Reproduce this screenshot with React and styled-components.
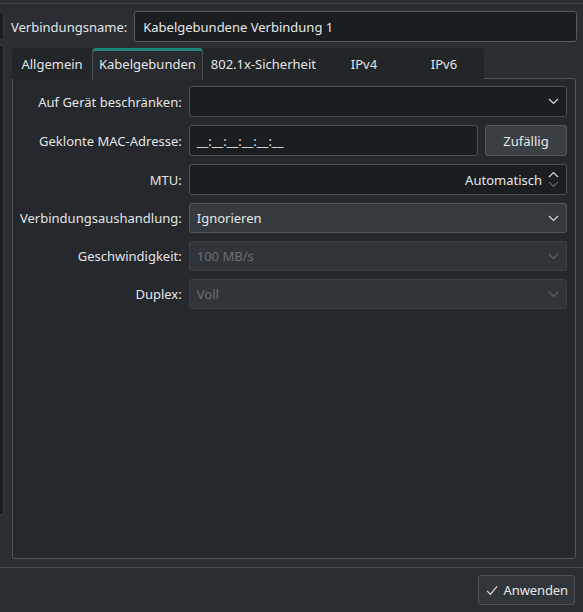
import styled, { createGlobalStyle } from 'styled-components'

const GlobalStyle = createGlobalStyle`
    html, body {
        margin: 0;
        padding: 0;
        background: #2a2e32;
    }
    body {
        font-family: "Noto Sans", "Open Sans", sans-serif;
        font-size: 13px;
        color: #e6e7e8;
    }
    * {
        box-sizing: border-box;
    }
`;

const tabs = ['Allgemein', 'Kabelgebunden', '802.1x-Sicherheit', 'IPv4', 'IPv6'];

function Chevron({ dim }) {
    return (
        <svg width="11" height="7" viewBox="0 0 11 7">
            <path d="M1 1 L5.5 5.5 L10 1" fill="none" stroke={dim ? '#5d6266' : '#d8d9da'} strokeWidth="1.2" />
        </svg>
    );
}

function SpinArrows() {
    return (
        <SpinBox>
            <svg width="11" height="7" viewBox="0 0 11 7">
                <path d="M1 6 L5.5 1.5 L10 6" fill="none" stroke="#d8d9da" strokeWidth="1.2" />
            </svg>
            <svg width="11" height="7" viewBox="0 0 11 7">
                <path d="M1 1 L5.5 5.5 L10 1" fill="none" stroke="#5d6266" strokeWidth="1.2" />
            </svg>
        </SpinBox>
    );
}

function App() {
    return (
        <Window>
            <GlobalStyle />
            <TopEdge />
            <Body>
                <SideStrip>
                    <StripBlock height={28} />
                    <StripBlock height={470} />
                </SideStrip>
                <Main>
                    <NameRow>
                        <Label>Verbindungsname:</Label>
                        <TextField>Kabelgebundene Verbindung 1</TextField>
                    </NameRow>

                    <TabBar>
                        {tabs.map((tab, i) => (
                            <Tab key={tab} active={i === 1} first={i === 0} last={i === tabs.length - 1}>
                                {tab}
                            </Tab>
                        ))}
                    </TabBar>

                    <Panel>
                        <Form>
                            <Label>Auf Gerät beschränken:</Label>
                            <Field height={31}>
                                <FieldText />
                                <Chevron />
                            </Field>

                            <Label>Geklonte MAC-Adresse:</Label>
                            <MacRow>
                                <Field height={31}>
                                    <FieldText>__:__:__:__:__:__</FieldText>
                                </Field>
                                <PushButton>Zufällig</PushButton>
                            </MacRow>

                            <Label>MTU:</Label>
                            <Field height={31}>
                                <FieldText align="right">Automatisch</FieldText>
                                <SpinArrows />
                            </Field>

                            <Label>Verbindungsaushandlung:</Label>
                            <Combo height={30}>
                                <FieldText>Ignorieren</FieldText>
                                <Chevron />
                            </Combo>

                            <Label>Geschwindigkeit:</Label>
                            <Combo height={30} disabled>
                                <FieldText>100 MB/s</FieldText>
                                <Chevron dim />
                            </Combo>

                            <Label>Duplex:</Label>
                            <Combo height={30} disabled>
                                <FieldText>Voll</FieldText>
                                <Chevron dim />
                            </Combo>
                        </Form>
                    </Panel>
                </Main>
            </Body>
            <Separator />
            <Footer>
                <FooterButton>
                    <svg width="12" height="11" viewBox="0 0 12 11">
                        <path d="M1 5.8 L4.4 9.4 L11 1.4" fill="none" stroke="#dcdddd" strokeWidth="1.2" />
                    </svg>
                    Anwenden
                </FooterButton>
            </Footer>
        </Window>
    );
}

const Window = styled.div`
    width: 583px;
    height: 612px;
    display: flex;
    flex-direction: column;
    background: #2a2e32;
    overflow: hidden;
`;

const TopEdge = styled.div`
    height: 4px;
    border-bottom: 1px solid #3f4449;
    flex-shrink: 0;
`;

const Body = styled.div`
    flex: 1;
    display: flex;
    flex-direction: row;
    min-height: 0;
`;

const SideStrip = styled.div`
    width: 4px;
    display: flex;
    flex-direction: column;
    gap: 5px;
    padding-top: 8px;
`;

const StripBlock = styled.div`
    height: ${({ height }) => height}px;
    background: #1b1e20;
    border: 1px solid #34393d;
    border-left: none;
    border-radius: 0 3px 3px 0;
`;

const Main = styled.div`
    flex: 1;
    display: flex;
    flex-direction: column;
    padding: 7px 6px 8px 7px;
`;

const NameRow = styled.div`
    height: 31px;
    display: flex;
    align-items: center;
    gap: 7px;
`;

const Label = styled.span`
    white-space: nowrap;
    text-align: right;
    color: #e3e4e5;
`;

const TextField = styled.div`
    flex: 1;
    height: 31px;
    display: flex;
    align-items: center;
    padding: 0 8px;
    background: #1b1e20;
    border: 1px solid #555a5f;
    border-radius: 3px;
`;

const TabBar = styled.div`
    margin: 6px 0 0 1px;
    height: 31px;
    display: flex;
    flex-direction: row;
    position: relative;
    z-index: 1;
`;

const Tab = styled.div`
    min-width: 80px;
    height: ${({ active }) => (active ? '32px' : '31px')};
    padding: ${({ active }) => (active ? '0 6px 3px 6px' : '0 8px')};
    display: flex;
    align-items: center;
    justify-content: center;
    white-space: nowrap;
    color: #e3e4e5;
    background: ${({ active }) => (active ? '#272b2f' : '#232629')};
    border-top: ${({ active }) => (active ? '3px solid #1d8479' : 'none')};
    border-left: ${({ active }) => (active ? '1px solid #4b5055' : 'none')};
    border-right: ${({ active }) => (active ? '1px solid #4b5055' : 'none')};
    border-radius: ${({ active, first, last }) =>
        active ? '4px 4px 0 0' : first ? '4px 0 0 0' : last ? '0 4px 0 0' : '0'};
`;

const Panel = styled.div`
    flex: 1;
    margin: -1px 1px 0 1px;
    padding: 7px 8px 8px 7px;
    background: #25292d;
    border: 1px solid #51565b;
    border-radius: 0 3px 3px 3px;
`;

const Form = styled.div`
    display: grid;
    grid-template-columns: auto 1fr;
    column-gap: 7px;
    row-gap: 8px;
    align-items: center;
`;

const Field = styled.div`
    height: ${({ height }) => height}px;
    flex: 1;
    display: flex;
    align-items: center;
    gap: 6px;
    padding: 0 7px 0 7px;
    background: #1b1e20;
    border: 1px solid #4b5055;
    border-radius: 3px;
`;

const Combo = styled.div`
    height: ${({ height }) => height}px;
    display: flex;
    align-items: center;
    padding: 0 7px 0 7px;
    background: ${({ disabled }) => (disabled ? '#30353a' : '#353a3f')};
    border: 1px solid ${({ disabled }) => (disabled ? '#3a3f44' : '#51565b')};
    border-radius: 3px;
    color: ${({ disabled }) => (disabled ? '#6a6e72' : '#e6e7e8')};
`;

const FieldText = styled.span`
    flex: 1;
    text-align: ${({ align }) => align || 'left'};
    white-space: nowrap;
`;

const SpinBox = styled.div`
    display: flex;
    flex-direction: column;
    gap: 3px;
`;

const MacRow = styled.div`
    display: flex;
    gap: 7px;
`;

const PushButton = styled.div`
    width: 82px;
    height: 31px;
    display: flex;
    align-items: center;
    justify-content: center;
    background: #3a3f44;
    border: 1px solid #53585d;
    border-radius: 3px;
`;

const Separator = styled.div`
    height: 1px;
    background: #464b50;
    flex-shrink: 0;
`;

const Footer = styled.div`
    height: 44px;
    display: flex;
    justify-content: flex-end;
    align-items: flex-start;
    padding: 7px 8px 0 0;
`;

const FooterButton = styled.div`
    height: 30px;
    padding: 0 6px 0 7px;
    display: flex;
    align-items: center;
    gap: 6px;
    background: #31363b;
    border: 1px solid #4d5257;
    border-radius: 3px;
    letter-spacing: -0.1px;
`;

export default App
